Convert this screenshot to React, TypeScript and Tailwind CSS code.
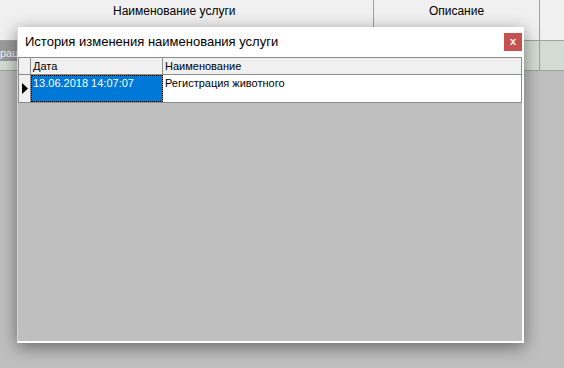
export default function App() {
  return (
    <div className="relative w-[564px] h-[368px] overflow-hidden bg-[#bfbfbf] font-['Liberation_Sans',sans-serif] text-black">
      {/* underlying grid */}
      <div className="flex h-[41px] bg-[#f0f0f0] border-b border-[#a0a0a0] text-[12px]">
        <div className="w-[374px] shrink-0 border-r border-[#a0a0a0] pt-[2px] pl-[113px]">Наименование услуги</div>
        <div className="w-[166px] shrink-0 border-r border-[#a0a0a0] pt-[2px] text-center">Описание</div>
        <div className="flex-1" />
      </div>
      <div className="flex h-[30px] bg-[#d3dcd3] border-b border-[#a0a0a0] text-[12px]">
        <div className="w-[374px] shrink-0 border-r border-[#a0a0a0]">
          <div className="w-[60px] h-[20px] bg-[#9b9b9b] text-[#f6f6f6] text-[11px] pt-[4px] overflow-hidden whitespace-nowrap">рация</div>
        </div>
        <div className="w-[166px] shrink-0 border-r border-[#a0a0a0]" />
        <div className="flex-1" />
      </div>

      {/* dialog */}
      <div className="absolute left-[17px] top-[27px] w-[507px] h-[316px] flex flex-col bg-[#bfbfbf] border-l border-[#d8d8d8] border-r-2 border-b-2 border-r-white border-b-white shadow-[0_4px_16px_rgba(0,0,0,0.45)]">
        <div className="h-[30px] shrink-0 bg-white flex items-center justify-between pl-[7px]">
          <span className="text-[13px] pb-[1px]">История изменения наименования услуги</span>
          <div className="w-[18px] h-[18px] bg-[#c75050] text-white text-[11px] font-bold flex items-center justify-center leading-none pb-[2px]">x</div>
        </div>
        <div className="border border-[#8c8c8c] bg-white text-[11px]">
          <div className="flex h-[17px] bg-[#f0f0f0] border-b border-[#8c8c8c]">
            <div className="w-[12px] shrink-0 border-r border-[#8c8c8c]" />
            <div className="w-[132px] shrink-0 border-r border-[#8c8c8c] pl-[2px] leading-[16px]">Дата</div>
            <div className="flex-1 pl-[2px] leading-[16px]">Наименование</div>
          </div>
          <div className="flex h-[27px]">
            <div className="w-[12px] shrink-0 bg-[#f0f0f0] border-r border-[#8c8c8c] flex items-center justify-center">
              <svg width="6" height="11" viewBox="0 0 6 11">
                <path d="M0 0 L6 5.5 L0 11 Z" fill="black" />
              </svg>
            </div>
            <div className="w-[132px] shrink-0 border-r border-[#8c8c8c] bg-[#0078d7] text-white outline-1 outline-dotted outline-black -outline-offset-1 pl-[2px] pt-[2px] leading-[13px]">13.06.2018 14:07:07</div>
            <div className="flex-1 pl-[2px] pt-[2px] leading-[13px]">Регистрация животного</div>
          </div>
        </div>
      </div>
    </div>
  )
}
